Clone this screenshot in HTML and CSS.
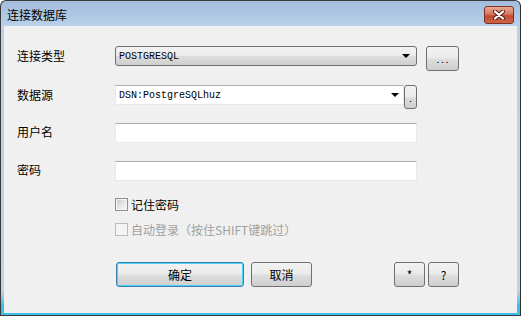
FILE: index.html
```html
<!DOCTYPE html>
<html lang="zh-CN">
<head>
    <meta charset="UTF-8">
    <title>连接数据库</title>
    <link rel="stylesheet" href="styles.css">
</head>
<body>
    <div class="window">
        <div class="titlebar">
            <span class="title">连接数据库</span>
            <div class="close-btn">
                <svg width="16" height="10" viewBox="0 0 16 10">
                    <path d="M4 1.5 L12 8.5 M12 1.5 L4 8.5" stroke="#5a2418" stroke-width="4.2" stroke-linecap="round"/>
                    <path d="M4 1.5 L12 8.5 M12 1.5 L4 8.5" stroke="#ffffff" stroke-width="2.2" stroke-linecap="round"/>
                </svg>
            </div>
        </div>
        <div class="client">
            <div class="row row-type">
                <label class="label">连接类型</label>
                <div class="combo combo-list">
                    <span class="combo-text">POSTGRESQL</span>
                    <span class="arrow"></span>
                </div>
                <button class="btn btn-more">. . .</button>
            </div>
            <div class="row row-source">
                <label class="label">数据源</label>
                <div class="combo combo-edit">
                    <span class="combo-text">DSN:PostgreSQLhuz</span>
                    <span class="arrow"></span>
                </div>
                <button class="btn btn-tiny">.</button>
            </div>
            <div class="row row-user">
                <label class="label">用户名</label>
                <input class="field" type="text">
            </div>
            <div class="row row-pass">
                <label class="label">密码</label>
                <input class="field" type="password">
            </div>
            <div class="check check-remember">
                <span class="box"></span>
                <span>记住密码</span>
            </div>
            <div class="check check-auto disabled">
                <span class="box"></span>
                <span>自动登录（按住SHIFT键跳过）</span>
            </div>
            <div class="actions">
                <button class="btn btn-ok">确定</button>
                <button class="btn btn-cancel">取消</button>
                <div class="spacer"></div>
                <button class="btn btn-small">*</button>
                <button class="btn btn-small">?</button>
            </div>
        </div>
    </div>
</body>
</html>
```

FILE: styles.css
```css
body {
    margin: 0;
    background: #ffffff;
    font-family: "Noto Sans CJK SC", "Liberation Sans", sans-serif;
    font-size: 12px;
    color: #000;
}
.window {
    width: 521px;
    height: 316px;
    box-sizing: border-box;
    border: 1px solid #3a3a3a;
    border-right-color: #2e2e2e;
    border-radius: 6px 6px 0 0;
    background: linear-gradient(to bottom, #a3bcdb 0, #b9d1ea 25px, #bcd3ec 290px, #3cc0ea 305px);
    display: flex;
    flex-direction: column;
    overflow: hidden;
}
.titlebar {
    height: 25px;
    display: flex;
    align-items: center;
    padding: 0 5px 0 6px;
}
.title {
    flex: 1;
    line-height: 14px;
    margin-top: 2px;
}
.close-btn {
    width: 28px;
    height: 16px;
    margin-top: 3px;
    margin-right: 1px;
    border: 1px solid #7a3324;
    border-radius: 3px;
    background: linear-gradient(to bottom, #e8a894 0, #d6775e 45%, #c24a2e 55%, #d0644a 100%);
    display: flex;
    align-items: center;
    justify-content: center;
}
.client {
    flex: 1;
    margin: 0 3px 2px 3px;
    background: #f0f0f0;
    padding: 20px 0 0 13px;
    display: flex;
    flex-direction: column;
}
.row {
    display: flex;
    align-items: flex-start;
}
.label {
    width: 98px;
    line-height: 19px;
}
.row-source { margin-top: 14px; }
.row-user { margin-top: 14px; }
.row-pass { margin-top: 18px; }
.row-user .label, .row-pass .label {
    line-height: 18px;
}
.combo {
    box-sizing: border-box;
    height: 20px;
    position: relative;
    display: flex;
    align-items: center;
}
.combo-text {
    font-family: "Liberation Mono", monospace;
    font-size: 10px;
    padding-left: 3px;
}
.combo-list {
    width: 302px;
    border: 1px solid #707070;
    border-radius: 3px;
    background: linear-gradient(to bottom, #f2f2f2 0, #ebebeb 50%, #dddddd 51%, #cfcfcf 100%);
}
.combo-edit {
    width: 289px;
    border: 1px solid #e3e9ef;
    border-top-color: #abadb3;
    background: #fff;
}
.arrow {
    position: absolute;
    top: 7px;
    width: 0;
    height: 0;
    border-left: 4px solid transparent;
    border-right: 4px solid transparent;
    border-top: 4px solid #000;
}
.combo-list .arrow { right: 6px; }
.combo-edit .arrow { right: 4px; }
.btn {
    box-sizing: border-box;
    border: 1px solid #707070;
    border-radius: 3px;
    background: linear-gradient(to bottom, #f2f2f2 0, #ebebeb 48%, #dddddd 52%, #cfcfcf 100%);
    font-family: "Noto Sans CJK SC", "Liberation Sans", sans-serif;
    font-size: 12px;
    color: #000;
    padding: 0;
    line-height: 1;
}
.btn-more {
    width: 33px;
    height: 25px;
    margin-left: 9px;
    font-size: 9px;
    padding-top: 2px;
}
.btn-tiny {
    width: 13px;
    height: 24px;
    margin-left: 0;
    font-size: 9px;
    padding-top: 3px;
}
.field {
    box-sizing: border-box;
    width: 302px;
    height: 20px;
    margin: 0;
    border: 1px solid #e3e9ef;
    border-top-color: #abadb3;
    background: #fff;
    outline: none;
}
.check {
    display: flex;
    align-items: center;
    margin-left: 98px;
    height: 13px;
    line-height: 13px;
}
.check-remember { margin-top: 17px; }
.check-auto { margin-top: 12px; }
.box {
    box-sizing: border-box;
    width: 13px;
    height: 13px;
    margin-right: 3px;
    border: 1px solid #8e8f8f;
    background: linear-gradient(135deg, #c9c9c9 0, #eaeaea 60%, #f6f6f6 100%);
    box-shadow: inset 0 0 0 1px #f4f4f4;
}
.disabled {
    color: #a0a0a0;
}
.disabled .box {
    border-color: #bcbcbc;
    background: #f4f4f4;
    box-shadow: none;
}
.actions {
    display: flex;
    align-items: flex-start;
    margin-top: 26px;
    margin-left: 99px;
    width: 343px;
}
.btn-ok {
    width: 128px;
    height: 25px;
    border-color: #3c7fb1;
    box-shadow: inset 0 0 0 1px #48d2f5;
}
.btn-cancel {
    width: 61px;
    height: 25px;
    margin-left: 7px;
}
.spacer {
    flex: 1;
}
.btn-small {
    width: 31px;
    height: 25px;
    margin-left: 3px;
}
```
